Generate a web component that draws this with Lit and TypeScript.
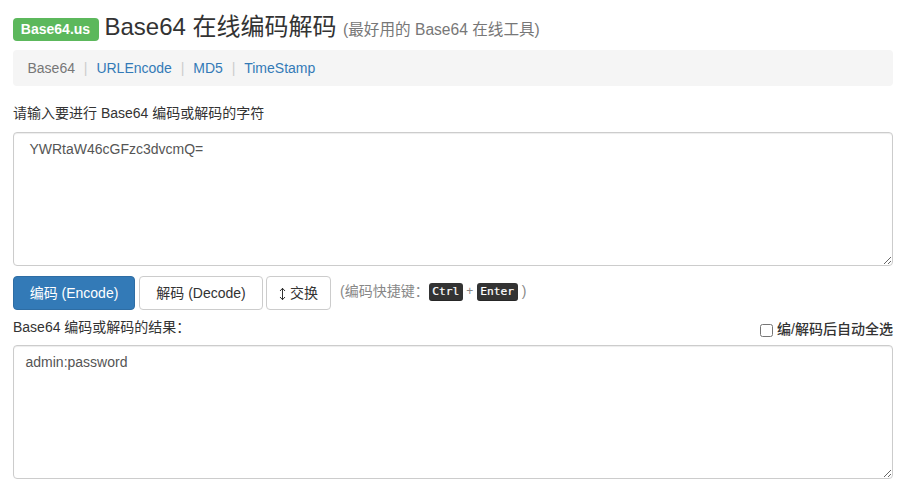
import { LitElement, html, css } from "lit";
import { customElement, state } from "lit/decorators.js";

@customElement("app-root")
export class AppRoot extends LitElement {
  @state() private source = " YWRtaW46cGFzc3dvcmQ=";
  @state() private result = "admin:password";

  static styles = css`
    :host {
      display: block;
      box-sizing: border-box;
      height: 485px;
      overflow: hidden;
      padding: 0 9px 0 13px;
      background: #fff;
      color: #333;
      font: 14px/20px "Liberation Sans", "Noto Sans CJK SC", sans-serif;
    }
    * { box-sizing: border-box; }
    .head {
      display: flex;
      align-items: baseline;
      height: 50px;
      margin: 0;
      padding-top: 13px;
      font-size: 24px;
      font-weight: 400;
      line-height: 28px;
      white-space: nowrap;
    }
    .badge {
      align-self: flex-start;
      width: 86px;
      height: 23px;
      margin: 5px 5.5px 0 0;
      padding-right: 1px;
      border-radius: 4px;
      background: #5cb85c;
      color: #fff;
      font: 700 14px/22px "Liberation Sans", sans-serif;
      text-align: center;
    }
    .sub { margin-left: 6.5px; color: #777; font-size: 15.6px; }
    .nav {
      display: flex;
      height: 36px;
      padding: 8px 14.5px;
      border-radius: 4px;
      background: #f5f5f5;
      color: #777;
    }
    .nav a { color: #337ab7; text-decoration: none; }
    .sep { width: 21.4px; text-align: center; color: #ccc; }
    .label { height: 46px; padding-top: 17px; }
    .area {
      display: block;
      width: 100%;
      height: 134px;
      margin: 0;
      padding: 6px 11.5px;
      border: 1px solid #ccc;
      border-radius: 4px;
      background: #fff;
      box-shadow: inset 0 1px 1px rgba(0, 0, 0, 0.075);
      color: #555;
      font: inherit;
      outline: none;
      resize: both;
    }
    .actions { display: flex; height: 44px; padding-top: 10px; white-space: nowrap; }
    .btn {
      height: 34px;
      margin: 0 4px 0 0;
      padding: 0;
      border: 1px solid #ccc;
      border-radius: 4px;
      background: #fff;
      color: #333;
      font: inherit;
    }
    .encode { width: 122px; border-color: #2e6da4; background: #337ab7; color: #fff; }
    .decode { width: 124px; margin-right: 3px; }
    .swap { display: flex; align-items: center; justify-content: center; width: 65px; gap: 4px; }
    .arrow { width: 7px; height: 14px; margin-top: 2px; fill: none; stroke: currentColor; }
    .hint { display: flex; align-items: center; height: 32px; margin-left: 5px; color: #888; }
    .hint > span { margin-top: -2px; }
    .key {
      width: 34px;
      height: 18px;
      border-radius: 3px;
      background: #333;
      box-shadow: inset 0 -1px 0 rgba(0, 0, 0, 0.25);
      color: #fff;
      font: 11.2px/18px "DejaVu Sans Mono", monospace;
      -webkit-text-stroke: 0.2px #fff;
      text-align: center;
    }
    .key.wide { width: 41px; }
    .plus { width: 14px; font-size: 12px; text-align: center; }
    .close { margin-left: 4px; }
    .result { display: flex; justify-content: space-between; height: 35px; padding-top: 7px; }
    .auto { display: flex; align-items: center; height: 24px; font-weight: 500; }
    .check { width: 13px; height: 13px; margin: 3px 4px 0 0; }
  `;

  private encode() {
    this.result = btoa(unescape(encodeURIComponent(this.source)));
  }

  private decode() {
    try {
      this.result = decodeURIComponent(escape(atob(this.source.trim())));
    } catch {
      this.result = "";
    }
  }

  private swap() {
    [this.source, this.result] = [this.result, this.source];
  }

  private onKey(e: KeyboardEvent) {
    if (e.ctrlKey && e.key === "Enter") this.encode();
  }

  render() {
    return html`
      <h1 class="head">
        <span class="badge">Base64.us</span><span>Base64 在线编码解码</span><span class="sub">(最好用的 Base64 在线工具)</span>
      </h1>
      <nav class="nav">
        <span>Base64</span><span class="sep">|</span><a href="#">URLEncode</a><span class="sep">|</span><a href="#">MD5</a><span class="sep">|</span><a href="#">TimeStamp</a>
      </nav>
      <div class="label">请输入要进行 Base64 编码或解码的字符</div>
      <textarea class="area" spellcheck="false" .value=${this.source}
        @input=${(e: Event) => (this.source = (e.target as HTMLTextAreaElement).value)}
        @keydown=${this.onKey}></textarea>
      <div class="actions">
        <button class="btn encode" @click=${this.encode}>编码 (Encode)</button>
        <button class="btn decode" @click=${this.decode}>解码 (Decode)</button>
        <button class="btn swap" @click=${this.swap}>
          <svg class="arrow" viewBox="0 0 7 14"><path d="M3.5 1v12M1 4l2.5-2.7L6 4M1 10l2.5 2.7L6 10" /></svg>
          <span>交换</span>
        </button>
        <span class="hint"><span>(编码快捷键：</span><kbd class="key">Ctrl</kbd><span class="plus">+</span><kbd class="key wide">Enter</kbd><span class="close">)</span></span>
      </div>
      <div class="result">
        <span>Base64 编码或解码的结果：</span>
        <label class="auto"><input class="check" type="checkbox" />编/解码后自动全选</label>
      </div>
      <textarea class="area" spellcheck="false" .value=${this.result}></textarea>
    `;
  }
}
